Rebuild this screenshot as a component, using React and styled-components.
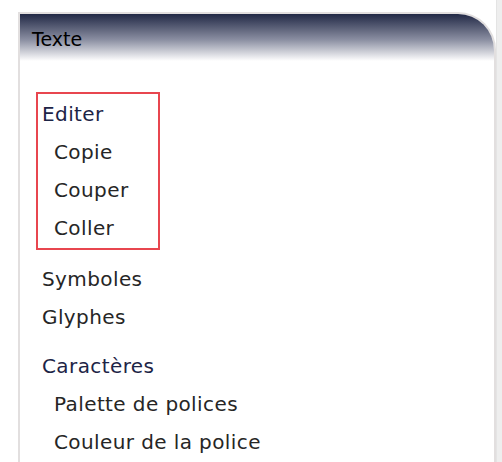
import React from 'react';
import styled, { createGlobalStyle } from 'styled-components';

const GlobalStyle = createGlobalStyle`
  html, body {
    margin: 0;
    padding: 0;
    background: #ffffff;
  }
  body {
    font-family: "DejaVu Sans", "Noto Sans", sans-serif;
  }
`;

const Page = styled.div`
  display: flex;
  width: 502px;
  height: 462px;
  overflow: hidden;
`;

const Main = styled.div`
  flex: 1;
  padding: 12px 0 0 18px;
`;

const Track = styled.div`
  width: 5px;
  background: #eeeeee;
  border-left: 1px solid #e4e4e4;
`;

const Panel = styled.section`
  width: 478px;
  height: 470px;
  box-sizing: border-box;
  border: 2px solid #e2dfdf;
  border-bottom: none;
  border-top-right-radius: 38px;
  background: #ffffff;
  overflow: hidden;
`;

const Header = styled.div`
  height: 47px;
  padding: 13px 0 0 12px;
  box-sizing: border-box;
  background: linear-gradient(to bottom, #222946 0%, #8b8fa2 55%, #ffffff 100%);
  font-size: 19px;
  line-height: 24px;
  color: #000000;
`;

const Body = styled.div`
  padding: 31px 0 0 16px;
`;

const Group = styled.div`
  width: 124px;
  box-sizing: border-box;
  border: 2px solid #e8464f;
  padding: 1px 0 1px 4px;
  margin-bottom: 10px;
`;

const List = styled.div`
  padding-left: 6px;
  margin-bottom: ${(p) => p.$gap || 0}px;
`;

const Item = styled.div`
  font-size: 20px;
  line-height: 38px;
  height: 38px;
  letter-spacing: 0.4px;
  white-space: nowrap;
  color: ${(p) => (p.$title ? '#1d2446' : '#262626')};
  padding-left: ${(p) => (p.$sub ? 12 : 0)}px;
`;

export default function App() {
  return (
    <Page>
      <GlobalStyle />
      <Main>
        <Panel>
          <Header>Texte</Header>
          <Body>
            <Group>
              <Item $title>Editer</Item>
              <Item $sub>Copie</Item>
              <Item $sub>Couper</Item>
              <Item $sub>Coller</Item>
            </Group>
            <List $gap={11}>
              <Item>Symboles</Item>
              <Item>Glyphes</Item>
            </List>
            <List>
              <Item $title>Caractères</Item>
              <Item $sub>Palette de polices</Item>
              <Item $sub>Couleur de la police</Item>
            </List>
          </Body>
        </Panel>
      </Main>
      <Track />
    </Page>
  );
}
